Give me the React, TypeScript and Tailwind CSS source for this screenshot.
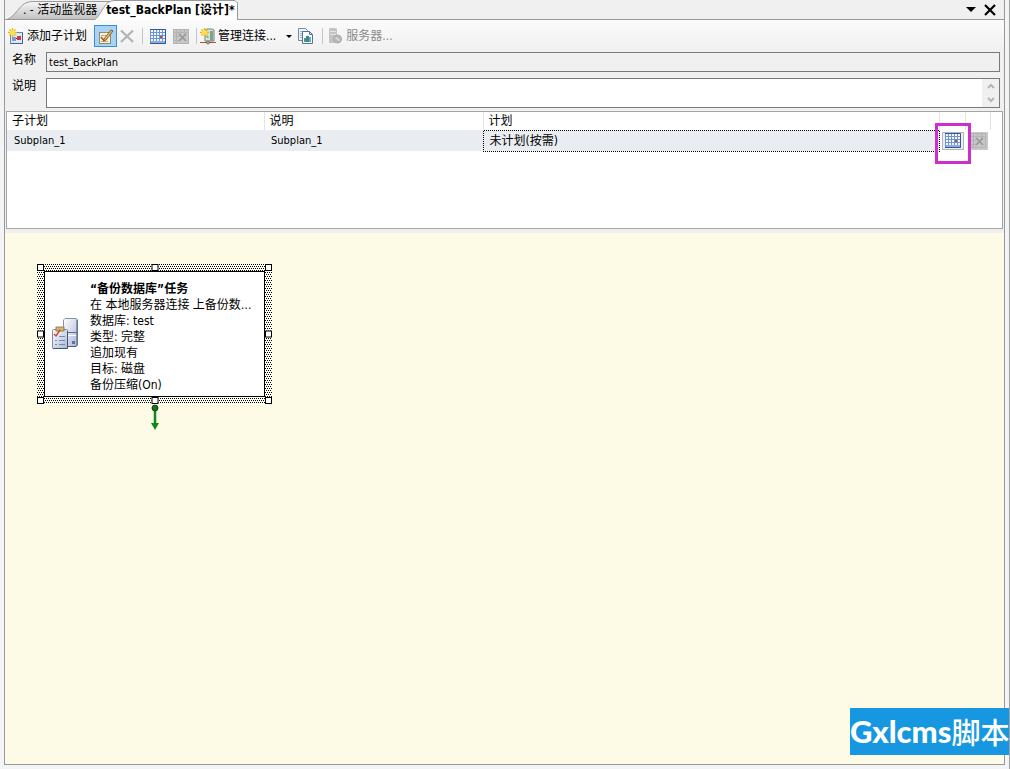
import { useState } from 'react'
import type { ReactNode } from 'react'

const SUBPLANS = [{ name: 'Subplan_1', description: 'Subplan_1', schedule: '未计划(按需)' }]

const TASK_LINES = ['在 本地服务器连接 上备份数…', '数据库: test', '类型: 完整', '追加现有', '目标: 磁盘', '备份压缩(On)']

const HANDLES = [
  'left-0 top-0',
  'left-1/2 -translate-x-1/2 top-0',
  'right-0 top-0',
  'left-0 top-1/2 -translate-y-1/2',
  'right-0 top-1/2 -translate-y-1/2',
  'left-0 bottom-0',
  'left-1/2 -translate-x-1/2 bottom-0',
  'right-0 bottom-0',
]

function Star() {
  return (
    <g>
      <path d="M4.500 0v9M0 4.500h9M1.500 1.500l6 6M7.500 1.500l-6 6" stroke="#e8b21c" strokeWidth="1.300" />
      <circle cx="4.500" cy="4.500" r="2.600" fill="#ffe04a" />
    </g>
  )
}

function AddSubplanIcon() {
  return (
    <svg width="16" height="16" viewBox="0 0 16 16" fill="none">
      <rect x="2.500" y="4.500" width="12" height="11" fill="#dde8f5" stroke="#6b86ad" />
      <path d="M3 15.500h11.500V5" stroke="#45608c" />
      <rect x="4" y="9" width="4" height="4" fill="#7f9cc4" />
      <path d="M8 10.500h3" stroke="#555" />
      <rect x="9" y="8" width="4" height="4" fill="#d2363c" />
      <Star />
    </svg>
  )
}

function EditIcon() {
  return (
    <svg width="17" height="17" viewBox="0 0 17 17" fill="none">
      <rect x="2.500" y="4.500" width="11" height="11" fill="#f8f0d6" stroke="#8d8b78" />
      <path d="M4 7.500h5M4 13.500h7" stroke="#b5b09a" />
      <path d="M4 9l2.500 3 3-2" stroke="#a34a22" strokeWidth="1.400" />
      <path d="M7 11l7-9 2 1-7 9-2.500 1z" fill="#efb75c" stroke="#7a5422" strokeWidth="0.900" />
    </svg>
  )
}

function DeleteIcon() {
  return (
    <svg width="16" height="16" viewBox="0 0 16 16" fill="none">
      <path d="M2 2.500L14 14M14 2.500L2 14" stroke="#b4b4b4" strokeWidth="2.300" />
    </svg>
  )
}

function CalendarIcon() {
  return (
    <svg width="16" height="15" viewBox="0 0 16 15" fill="none">
      <rect x="0" y="0" width="16" height="15" fill="#6c94cf" />
      {[1, 4, 7, 10].map(y =>
        [1, 4, 7, 10, 13].map(x => (
          <rect key={`${x}-${y}`} x={x} y={y} width="2" height="2" fill={x === 10 && y === 7 ? '#d8432f' : '#f2f7ff'} />
        )),
      )}
      <path d="M1 13h14" stroke="#f2f7ff" strokeWidth="0.500" />
      <path d="M0 0.500h15.500v14H0" stroke="#31589c" />
    </svg>
  )
}

function CalendarOffIcon() {
  return (
    <svg width="16" height="15" viewBox="0 0 16 15" fill="none">
      <rect x="0.500" y="0.500" width="15" height="14" fill="#c6c6c6" stroke="#b4b4b4" />
      <path d="M1 3.500h14M1 7.500h5M1 11.500h5M3.500 1v13M7.500 1v4M11.500 1v4" stroke="#b4b4b4" />
      <path d="M6 5l7 7M13 5l-7 7" stroke="#979797" strokeWidth="1.600" />
    </svg>
  )
}

function ConnectionIcon() {
  return (
    <svg width="16" height="17" viewBox="0 0 16 17" fill="none">
      <path d="M5 2l2-1h5l2 1v11H5z" fill="#d5e5dc" stroke="#70877d" />
      <path d="M10 3h3v10h-3z" fill="#7fa193" />
      <path d="M6.500 9h2" stroke="#3f7a4e" />
      <path d="M0 14.500h5M11 14.500h5" stroke="#c0473e" />
      <path d="M8 13v2M5 14.500h6" stroke="#555" />
      <circle cx="8" cy="14.500" r="1.500" fill="#d8b24a" stroke="#555" strokeWidth="0.700" />
      <Star />
    </svg>
  )
}

function ReportIcon() {
  return (
    <svg width="16" height="16" viewBox="0 0 16 16" fill="none">
      <path d="M0.500 0.500h7l2 2v10h-9z" fill="#eef4fa" stroke="#6f8aa6" />
      <path d="M2 3.500h5M2 5.500h3M2 7.500h3M2 9.500h3" stroke="#9fb3c9" />
      <path d="M4.500 3.500h7l3 3v9h-10z" fill="#fff" stroke="#56738f" />
      <path d="M11.500 3.500v3h3" stroke="#56738f" />
      <path d="M6 10h2v4H6z" fill="#4f9b78" />
      <path d="M8 8h3v6H8z" fill="#3b7fa6" />
      <path d="M11 9h2v5h-2z" fill="#6cb0a2" />
    </svg>
  )
}

function ServerIcon() {
  return (
    <svg width="15" height="16" viewBox="0 0 15 16" fill="none">
      <path d="M1 1l1-1h6l1 1v14H1z" fill="#c4c4c4" />
      <path d="M2 3.500h6M2 6.500h6" stroke="#e4e4e4" />
      <circle cx="9.500" cy="11" r="4" fill="#b8b8b8" stroke="#a8a8a8" />
      <path d="M7.500 9.500l4 3" stroke="#e0e0e0" strokeWidth="1.500" />
    </svg>
  )
}

function TaskIcon() {
  return (
    <svg width="28" height="32" viewBox="0 0 28 32" fill="none" className="shrink-0">
      <defs>
        <linearGradient id="cabinet" x1="0" y1="0" x2="1" y2="1">
          <stop offset="0" stopColor="#fff" />
          <stop offset="1" stopColor="#a9b6d2" />
        </linearGradient>
      </defs>
      <path d="M12.500 2l1.500-1.500h11l1.500 1V27L25 28.500H12.500z" fill="url(#cabinet)" stroke="#8793b3" />
      <path d="M26 2v25l-1 1.500H13" stroke="#4d5c82" />
      <path d="M13 14.500h13" stroke="#5d6d96" />
      <path d="M17 17.500h8" stroke="#fff" />
      <rect x="21" y="23" width="3" height="3" fill="#5a72a6" />
      <rect x="1.500" y="11.500" width="15" height="19" rx="1" fill="url(#cabinet)" stroke="#7d8bb0" />
      <rect x="5" y="9" width="8" height="4" fill="#d6b36d" stroke="#8b6f3c" strokeWidth="0.800" />
      <path d="M3 16l2 2 4-6" stroke="#cf4526" strokeWidth="1.400" />
      <path d="M8 18.500h6M4 22.500h2M8 22.500h6M4 26.500h2M8 26.500h6" stroke="#7688b3" />
      <path d="M2 30.500h14.500V13" stroke="#43547f" />
    </svg>
  )
}

function ToolButton({ label, children, disabled }: { label: string; children: ReactNode; disabled?: boolean }) {
  return (
    <button aria-label={label} disabled={disabled} className="flex items-center gap-[3px] disabled:text-[#8a8a8a]">
      {children}
    </button>
  )
}

function Separator() {
  return <span className="h-4 w-px bg-[#c5c5c5]" />
}

function TabStrip() {
  return (
    <div className="flex h-5 items-stretch border-b border-[#9a9a9a] pl-[2px]" role="tablist">
      <button role="tab" aria-selected={false} className="relative pl-4 pr-1">
        <svg width="106" height="20" viewBox="0 0 106 20" className="absolute left-0 top-0">
          <defs>
            <linearGradient id="tab" x1="0" y1="0" x2="0" y2="1">
              <stop offset="0" stopColor="#f6f6f6" />
              <stop offset="1" stopColor="#c0c0c0" />
            </linearGradient>
          </defs>
          <path d="M0 19.500C8 17 13 4 20 2.500Q22 1.500 26 1.500H103V19.500z" fill="url(#tab)" stroke="#9a9a9a" />
        </svg>
        <span className="relative whitespace-pre">. - 活动监视器</span>
      </button>
      <button role="tab" aria-selected className="relative px-[5px] font-bold">
        <svg width="144" height="20" viewBox="0 0 144 20" className="absolute right-[2px] top-0">
          <path d="M0 20C6 17 10 4 15 2Q17 0.500 21 0.500H141L143.500 3V20" fill="#fff" stroke="#9a9a9a" />
        </svg>
        <span className="relative whitespace-pre">test_BackPlan [设计]*</span>
      </button>
      <div className="ml-auto flex items-center gap-2 pr-2">
        <button aria-label="窗口列表">
          <svg width="10" height="5" viewBox="0 0 10 5"><path d="M0 0h10L5 5z" fill="#000" /></svg>
        </button>
        <button aria-label="关闭">
          <svg width="12" height="12" viewBox="0 0 12 12"><path d="M1 1l10 10M11 1L1 11" stroke="#000" strokeWidth="2.200" /></svg>
        </button>
      </div>
    </div>
  )
}

function Toolbar() {
  return (
    <div className="flex h-8 items-center bg-linear-to-b from-[#fbfbfb] to-[#f0f0f0] pl-[3px]">
      <ToolButton label="添加子计划"><AddSubplanIcon />添加子计划</ToolButton>
      <button aria-label="子计划属性" aria-pressed className="ml-[7px] flex h-[22px] w-[23px] items-center justify-center border border-[#3c8fd0] bg-[#a9d3f2]">
        <EditIcon />
      </button>
      <div className="ml-[2px] flex items-center gap-[7px]">
        <ToolButton label="删除子计划" disabled><DeleteIcon /></ToolButton>
        <Separator />
        <div className="flex gap-[7px]">
          <ToolButton label="子计划计划"><CalendarIcon /></ToolButton>
          <ToolButton label="删除计划" disabled><CalendarOffIcon /></ToolButton>
        </div>
        <Separator />
      </div>
      <div className="ml-[3px] flex items-center gap-[6px]">
        <button className="flex items-center gap-[2px]">
          <ConnectionIcon />管理连接...
          <svg width="6" height="3" viewBox="0 0 6 3" className="ml-2"><path d="M0 0h6L3 3z" fill="#000" /></svg>
        </button>
        <ToolButton label="报告和日志记录"><ReportIcon /></ToolButton>
        <div className="ml-[2px] flex items-center gap-[5px]">
          <Separator />
          <ToolButton label="服务器" disabled><ServerIcon />服务器...</ToolButton>
        </div>
      </div>
    </div>
  )
}

function SubplanTable() {
  return (
    <div className="mx-px mt-[3px] h-[118px] border border-[#a5a5a5] bg-white pr-[11px]">
      <table className="w-full table-fixed border-collapse text-left">
        <colgroup>
          <col className="w-[257px]" />
          <col className="w-[219px]" />
          <col />
          <col className="w-[26px]" />
          <col className="w-[25px]" />
        </colgroup>
        <thead>
          <tr className="h-[18px]">
            {['子计划', '说明', '计划', '', ''].map((h, i) => (
              <th key={i} className="border-r border-[#e3e3e3] px-[5px] py-0 font-normal leading-4">{h}</th>
            ))}
          </tr>
        </thead>
        <tbody>
          {SUBPLANS.map(p => (
            <tr key={p.name} className="h-[21px]">
              <td className="bg-[#e9edf1] px-[7px] py-0 text-[11px] leading-4">{p.name}</td>
              <td className="bg-[#e9edf1] px-[7px] py-0 text-[11px] leading-4">{p.description}</td>
              <td className="border border-dotted border-black bg-[#e9edf1] px-[6px] py-0 leading-4">{p.schedule}</td>
              <td className="relative p-0">
                <button aria-label="编辑计划" className="mx-auto flex h-[18px] w-[22px] items-center justify-center border border-[#b5b5b5] bg-[#eee]">
                  <CalendarIcon />
                </button>
                <span className="pointer-events-none absolute -left-[5px] -top-[7px] h-[41px] w-9 border-3 border-[#cc2fcc]" />
              </td>
              <td className="p-0">
                <button aria-label="移除计划" disabled className="mx-auto flex h-[18px] w-5 items-center justify-center bg-[#c8c8c8]">
                  <CalendarOffIcon />
                </button>
              </td>
            </tr>
          ))}
        </tbody>
      </table>
    </div>
  )
}

function BackupTask() {
  return (
    <div className="absolute left-8 top-[31px] w-[235px]">
      <div className="relative bg-[#fffff0] bg-[conic-gradient(at_1px_1px,transparent_75%,#000_0),conic-gradient(at_1px_1px,transparent_75%,#000_0)] bg-[length:2px_4px] bg-[position:0_0,1px_2px] p-[7px]">
        <div className="flex h-[126px] items-center gap-[11px] border border-black bg-white pl-[6px]">
          <TaskIcon />
          <div className="whitespace-nowrap pt-[6px] leading-4">
            <div className="font-bold">“备份数据库”任务</div>
            {TASK_LINES.map(line => <div key={line}>{line}</div>)}
          </div>
        </div>
        {HANDLES.map(pos => (
          <span key={pos} className={`absolute size-[7px] border border-black bg-white ${pos}`} />
        ))}
      </div>
      <svg width="10" height="26" viewBox="0 0 10 26" className="mx-auto">
        <path d="M5 4v18" stroke="#118a1c" strokeWidth="2.500" />
        <path d="M1 19h8l-4 7z" fill="#118a1c" />
        <circle cx="5" cy="4" r="3" fill="#1d6b24" stroke="#0b4a12" />
      </svg>
    </div>
  )
}

export default function App() {
  const [description, setDescription] = useState('')

  return (
    <div className="relative flex min-h-screen overflow-hidden border-r border-[#a0a0a0] bg-[#f3f4f6] px-1 pb-1 font-['DejaVu_Sans_Condensed','Noto_Sans_CJK_SC',sans-serif] text-[12px] leading-4 text-black">
      <main className="flex min-w-0 flex-1 flex-col border-x border-b border-[#999] bg-[#f0f0f0]">
        <TabStrip />
        <Toolbar />
        <div className="flex items-start pl-[7px] pr-1">
          <label htmlFor="plan-name" className="w-[34px] shrink-0">名称</label>
          <input id="plan-name" readOnly value="test_BackPlan" className="h-5 min-w-0 flex-1 border border-[#7a7a7a] bg-[#f0f0f0] px-[2px] text-[11px] outline-none" />
        </div>
        <div className="mt-[6px] flex items-start pl-[7px] pr-1">
          <label htmlFor="plan-desc" className="w-[34px] shrink-0">说明</label>
          <div className="flex h-[30px] min-w-0 flex-1 border border-[#7a7a7a] bg-white">
            <textarea
              id="plan-desc"
              value={description}
              onChange={e => setDescription(e.target.value)}
              className="min-w-0 flex-1 resize-none overflow-hidden px-[2px] outline-none"
            />
            <div className="flex w-[17px] flex-col items-center justify-around bg-[#f0f0f0]">
              <svg width="8" height="6" viewBox="0 0 8 6" fill="none"><path d="M1 5l3-3 3 3" stroke="#b5b5b5" strokeWidth="2" /></svg>
              <svg width="8" height="6" viewBox="0 0 8 6" fill="none"><path d="M1 1l3 3 3-3" stroke="#b5b5b5" strokeWidth="2" /></svg>
            </div>
          </div>
        </div>
        <SubplanTable />
        <section className="relative mt-1 min-h-[220px] flex-1 bg-[#fdfbe6]">
          <BackupTask />
        </section>
      </main>
      <div className="absolute bottom-[14px] right-[-1px] flex h-[47px] w-40 items-center overflow-hidden whitespace-nowrap bg-[#1797e0] text-white">
        <span className="font-['Lato',sans-serif] text-[31px] font-black leading-[47px]">Gxlcms</span>
        <span className="font-['Noto_Sans_CJK_SC',sans-serif] text-[29px] font-medium leading-[47px]">脚本</span>
      </div>
    </div>
  )
}
